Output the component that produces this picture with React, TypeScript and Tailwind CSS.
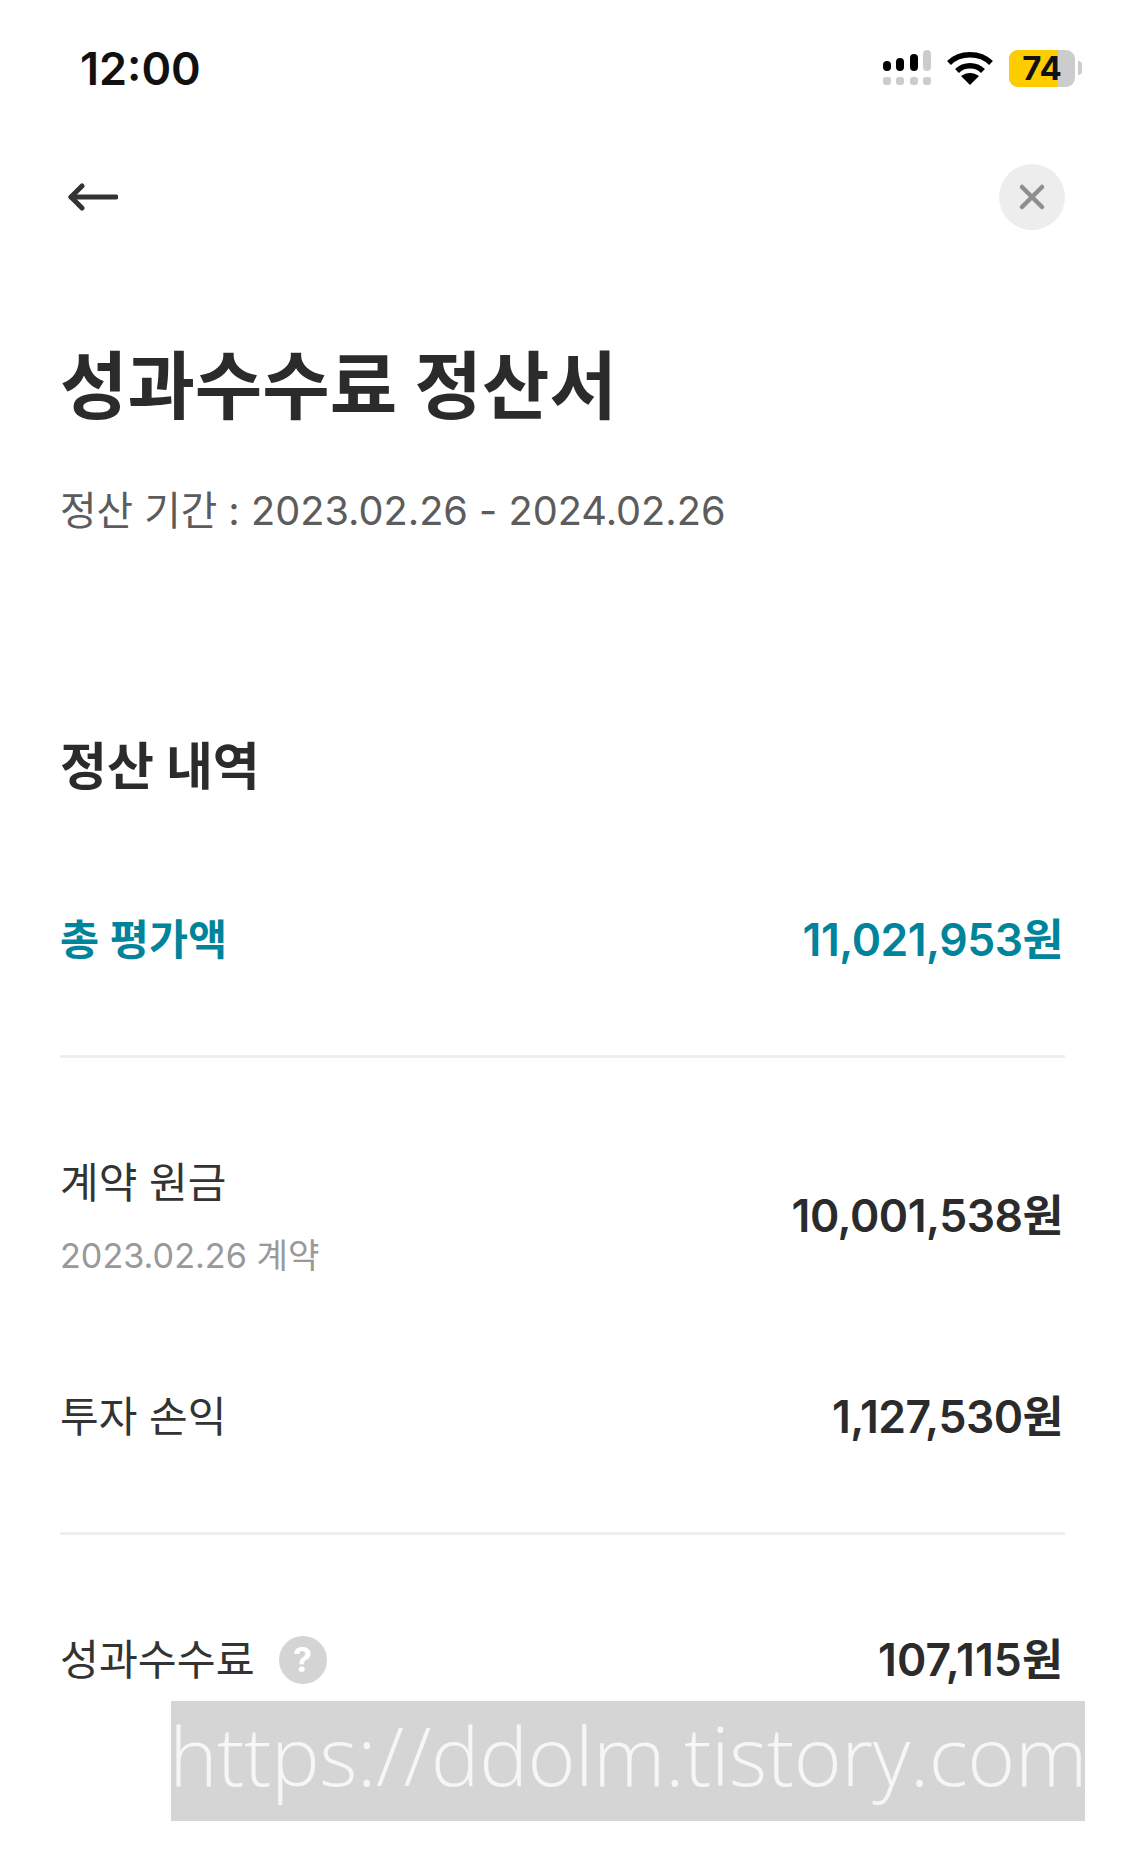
const font = "font-['Inter','Noto_Sans_CJK_KR',sans-serif]"

const StatusBar = () => {
  return (
    <div className="flex h-[136px] items-center justify-between pl-[80px] pr-[43px]">
      <div className="text-[45px] leading-none font-semibold text-[#111]">12:00</div>
      <div className="flex items-center gap-[16px]">
        <svg width="48" height="36" viewBox="0 0 48 36">
          <rect x="0" y="11" width="8" height="10" rx="4" fill="#000" />
          <rect x="13" y="8" width="8" height="13" rx="4" fill="#000" />
          <rect x="27" y="4" width="8" height="17" rx="4" fill="#000" />
          <rect x="40" y="0" width="8" height="21" rx="4" fill="#ccc" />
          <rect x="0" y="27" width="8" height="8" rx="3" fill="#ccc" />
          <rect x="13" y="27" width="8" height="8" rx="3" fill="#ccc" />
          <rect x="27" y="27" width="8" height="8" rx="3" fill="#ccc" />
          <rect x="40" y="27" width="8" height="8" rx="3" fill="#ccc" />
        </svg>
        <svg width="46" height="36" viewBox="0 0 46 36" fill="none" stroke="#000" strokeWidth="5.5">
          <path d="M2 13C13 2 33 2 44 13" />
          <path d="M10 21C17 14 29 14 36 21" />
          <path d="M23 35L14 26C20 22 26 22 32 26Z" fill="#000" stroke="none" />
        </svg>
        <div className="flex items-center gap-[3px]">
          <div className="relative flex h-[37px] w-[66px] rounded-[9px] bg-[#ccc]">
            <div className="h-full w-[49px] rounded-l-[9px] bg-[#ffcc00]"></div>
            <div className="absolute inset-0 flex items-center justify-center text-[33px] leading-none font-bold text-[#111]">74</div>
          </div>
          <div className="h-[14px] w-[4px] rounded-r-full bg-[#ccc]"></div>
        </div>
      </div>
    </div>
  )
}

const Row = ({ label, value }: { label: string; value: string }) => {
  return (
    <div className="flex items-center justify-between">
      <div className="text-[42px] leading-[60px] text-[#333]">{label}</div>
      <div className="pr-[2px] text-[44.5px] leading-[60px] font-semibold tracking-[-0.5px] text-[#2b2b2b]">{value}</div>
    </div>
  )
}

export default function App() {
  return (
    <div className={`relative h-[1861px] w-[1125px] overflow-hidden bg-white ${font}`}>
      <StatusBar />

      <div className="mt-[28px] flex h-[66px] items-center justify-between pl-[68px] pr-[60px]">
        <svg width="50" height="30" viewBox="0 0 50 30" fill="none" stroke="#333" strokeWidth="5" strokeLinecap="round" strokeLinejoin="round">
          <path d="M48 15H3" />
          <path d="M14 4L3 15L14 26" />
        </svg>
        <div className="flex h-[66px] w-[66px] items-center justify-center rounded-full bg-[#ededed]">
          <svg width="28" height="28" viewBox="0 0 28 28" fill="none" stroke="#8e8e8e" strokeWidth="4.5" strokeLinecap="round">
            <path d="M4 4L24 24" />
            <path d="M24 4L4 24" />
          </svg>
        </div>
      </div>

      <div className="px-[60px]">
        <h1 className="mt-[109px] text-[73.3px] leading-[96px] font-bold text-[#2b2b2b]">성과수수료 정산서</h1>
        <div className="mt-[46px] text-[39.7px] leading-[60px] text-[#5c5c5c]">정산 기간 : 2023.02.26 - 2024.02.26</div>

        <h2 className="mt-[191px] text-[51px] leading-[70px] font-bold text-[#2b2b2b]">정산 내역</h2>

        <div className="mt-[108px] flex items-center justify-between">
          <div className="text-[42.5px] leading-[60px] font-semibold text-[#00849b]">총 평가액</div>
          <div className="pr-[2px] text-[44.5px] leading-[60px] font-semibold tracking-[-0.5px] text-[#00849b]">11,021,953원</div>
        </div>

        <div className="mt-[85px] h-[3px] bg-[#eeeeee]"></div>

        <div className="mt-[95px] flex items-center justify-between">
          <div>
            <div className="text-[42px] leading-[60px] text-[#333]">계약 원금</div>
            <div className="mt-[21px] text-[34.2px] leading-[44px] text-[#999]">2023.02.26 계약</div>
          </div>
          <div className="pr-[2px] text-[44.5px] leading-[60px] font-semibold tracking-[-0.5px] text-[#2b2b2b]">10,001,538원</div>
        </div>

        <div className="mt-[109px]">
          <Row label="투자 손익" value="1,127,530원" />
        </div>

        <div className="mt-[85px] h-[3px] bg-[#eeeeee]"></div>

        <div className="mt-[95px] flex items-center justify-between">
          <div className="flex items-center gap-[24px]">
            <div className="text-[42.3px] leading-[60px] text-[#333]">성과수수료</div>
            <div className="flex h-[48px] w-[48px] items-center justify-center rounded-full bg-[#d4d4d4] text-[34px] leading-none font-bold text-white">?</div>
          </div>
          <div className="pr-[2px] text-[44.5px] leading-[60px] font-semibold tracking-[0.1px] text-[#2b2b2b]">107,115원</div>
        </div>
      </div>

      <div className="absolute left-[171px] top-[1701px] flex h-[120px] w-[914px] items-center justify-center bg-[#d5d5d5] pb-[14px] font-['Open_Sans',sans-serif] text-[82px] leading-none font-light tracking-[-0.5px] whitespace-nowrap text-[#f6f6f6]">
        https://ddolm.tistory.com
      </div>
    </div>
  )
}
